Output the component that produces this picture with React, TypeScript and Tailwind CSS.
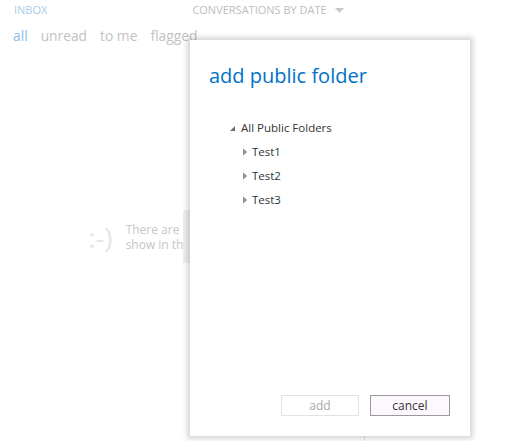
import { ReactNode } from "react";

const font = { fontFamily: '"Open Sans", "Noto Sans", sans-serif' };

function Caret({ open }: { open?: boolean }) {
  // tree expander glyphs
  return open ? (
    <svg width="7" height="7" viewBox="0 0 7 7" className="mr-[5px]">
      <path d="M6 1 L6 6 L1 6 Z" fill="#6b6b6b" />
    </svg>
  ) : (
    <svg width="6" height="8" viewBox="0 0 6 8" className="mr-[4px]">
      <path d="M1 0.5 L5 4 L1 7.5 Z" fill="#8a8a8a" />
    </svg>
  );
}

function TreeRow({ children, open, indent }: { children: ReactNode; open?: boolean; indent?: boolean }) {
  return (
    <div className={`flex h-[24px] items-center text-[11.5px] text-[#333] ${indent ? "pl-[13px]" : ""}`}>
      <Caret open={open} />
      <span>{children}</span>
    </div>
  );
}

export default function App() {
  return (
    <div className="relative h-[441px] w-[515px] overflow-hidden bg-white" style={font}>
      {/* mail list behind the dialog */}
      <div className="flex h-[20px] items-center text-[11px] uppercase">
        <span className="pl-[14px] text-[#a8cbea]">Inbox</span>
        <span className="ml-[145px] flex items-center text-[#bdbdbd]">
          Conversations by date
          <svg width="9" height="5" viewBox="0 0 9 5" className="ml-[8px]">
            <path d="M0 0 L9 0 L4.5 5 Z" fill="#c8c8c8" />
          </svg>
        </span>
      </div>
      <div className="mt-[6px] flex gap-[13px] pl-[13px] text-[13.8px] leading-[20px] text-[#c2c2c2]">
        <span className="text-[#8cbde6]">all</span>
        <span>unread</span>
        <span>to me</span>
        <span>flagged</span>
      </div>
      <div className="mt-[176px] flex w-[183px] items-center overflow-hidden whitespace-nowrap pl-[88px]">
        <span className="text-[28px] leading-[30px] text-[#e6e6e6]">:-)</span>
        <div className="ml-[13px] text-[12px] leading-[15px] text-[#c6c6c6]">
          <div>There are no items to</div>
          <div>show in this view.</div>
        </div>
      </div>
      <div className="absolute left-[183px] top-[210px] h-[53px] w-[7px] bg-[#efefef]" />
      <div className="absolute left-[364px] top-[430px] h-[11px] w-px bg-[#e4e4e4]" />

      {/* dialog */}
      <div className="absolute left-[190px] top-[40px] flex h-[396px] w-[280px] flex-col bg-white shadow-[0_0_5px_3px_rgba(0,0,0,0.16)]">
        <h1 className="pl-[19px] pt-[22px] text-[20px] leading-[28px] text-[#0072c6]">add public folder</h1>
        <div className="mt-[26px] pl-[39px]">
          <TreeRow open>All Public Folders</TreeRow>
          <TreeRow indent>Test1</TreeRow>
          <TreeRow indent>Test2</TreeRow>
          <TreeRow indent>Test3</TreeRow>
        </div>
        <div className="mt-auto mb-[20px] flex justify-end gap-[11px] pr-[20px]">
          <button className="h-[21px] w-[78px] border border-[#e2e2e2] bg-white text-[12px] text-[#a8a8a8]">add</button>
          <button className="h-[21px] w-[80px] border border-[#9a9a9a] bg-[#fdf8fd] text-[12px] text-[#333]">cancel</button>
        </div>
      </div>
    </div>
  );
}
